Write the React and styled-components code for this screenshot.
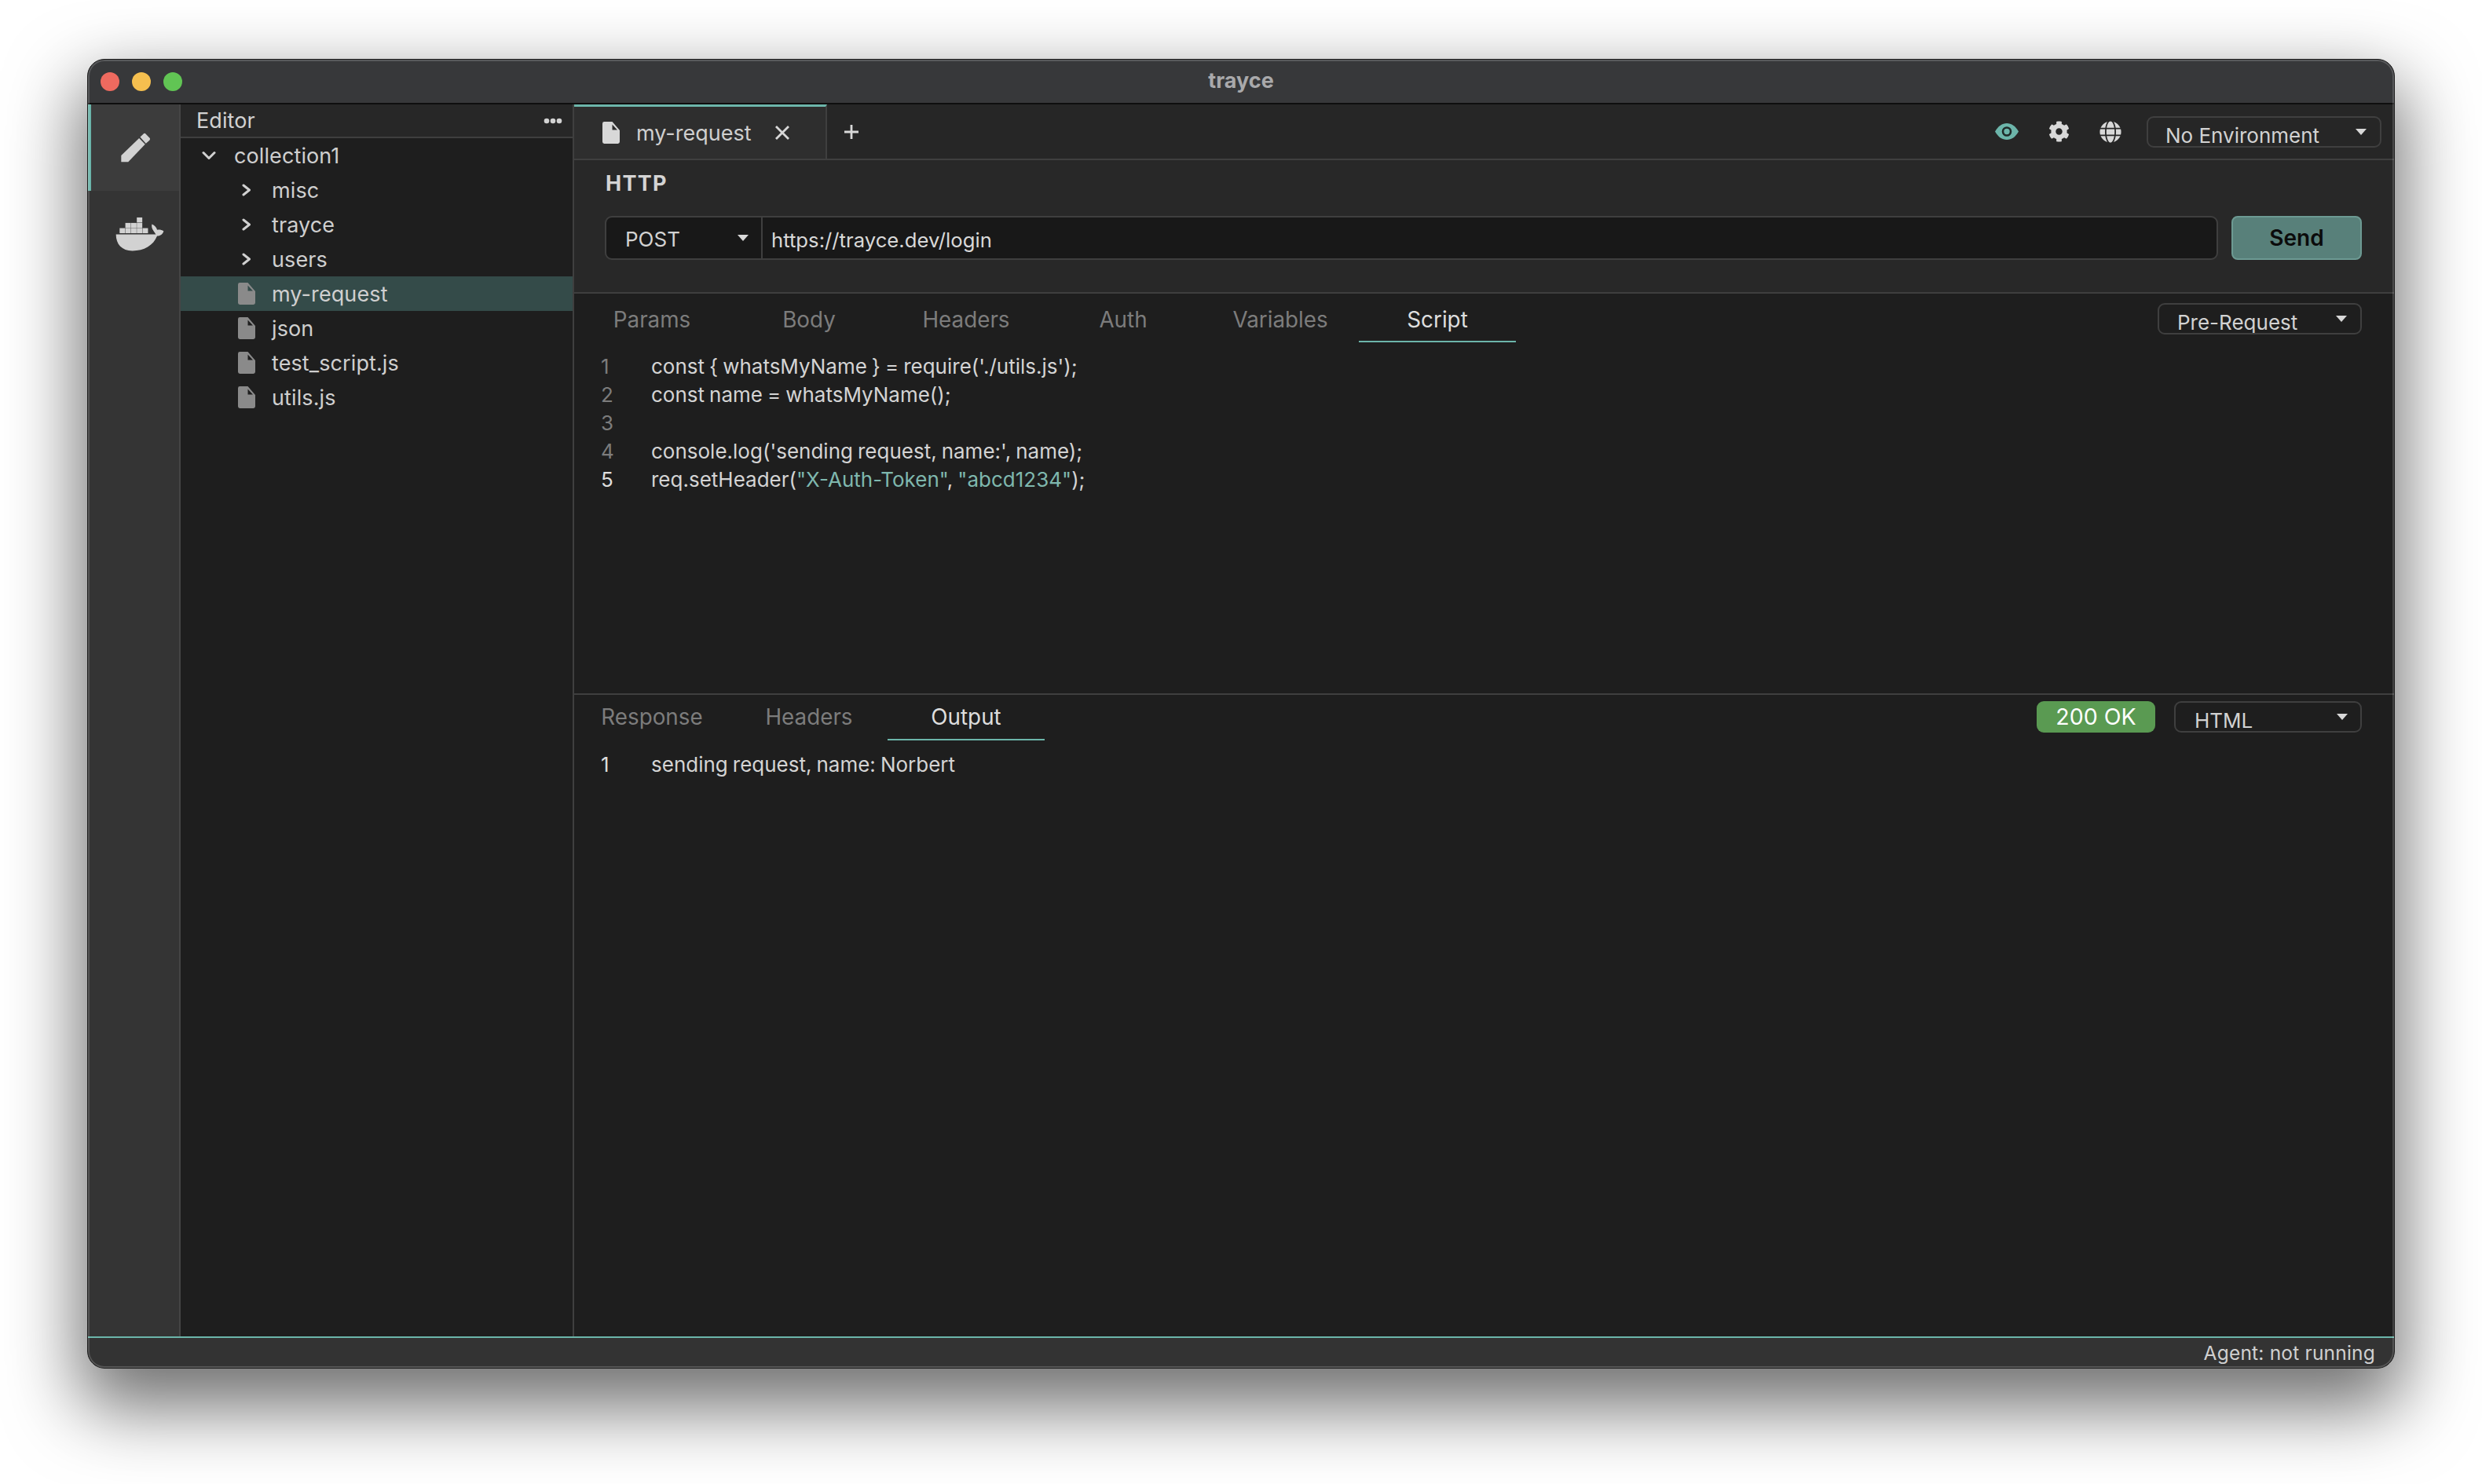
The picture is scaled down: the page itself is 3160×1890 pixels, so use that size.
import React from "react";
import styled, { createGlobalStyle } from "styled-components";
import { FaCog, FaGlobe } from "react-icons/fa";

const Global = createGlobalStyle`
  html, body { margin: 0; padding: 0; background: #fff; }
  * { box-sizing: border-box; }
  body { font-family: Inter, "Noto Sans", sans-serif; font-size: 28px; color: #d4d4d4; }
`;

const TEAL = "#6cb5aa";

const Page = styled.div`
  width: 3160px; height: 1890px; padding: 75px 111px 147px 111px; background: #fff; overflow: hidden;
`;
const Win = styled.div`
  position: relative; height: 100%; display: flex; flex-direction: column; overflow: hidden;
  border-radius: 22px; border: 1px solid #1c1c1c; background: #1e1e1e;
`;
const Shadow = styled.div`
  height: 100%; border-radius: 22px;
  box-shadow: 0 40px 92px 10px rgba(0,0,0,.56);
`;
const Rim = styled.div`
  position: absolute; inset: 0; border-radius: 21px; pointer-events: none;
  box-shadow: inset 0 0 0 2px rgba(255,255,255,.17);
`;
const TitleBar = styled.header`
  height: 57px; flex: none; display: flex; align-items: center; position: relative;
  background: #37383a; border-bottom: 2px solid #0e0e0e; padding-left: 16px; gap: 16px;
`;
const Light = styled.span`
  width: 24px; height: 24px; border-radius: 50%; background: ${p => p.$c};
`;
const Title = styled.div`
  position: absolute; left: 0; right: 0; text-align: center; top: 11px;
  font-size: 27px; line-height: 32px; font-weight: 700; color: #a9a9ab;
`;
const Body = styled.div`flex: 1; min-height: 0; display: flex;`;
const Activity = styled.nav`
  width: 118px; flex: none; background: #343434; border-right: 2px solid #454545;
`;
const ActItem = styled.div`
  height: ${p => p.$h}px; display: flex; align-items: center; justify-content: center;
  padding-left: ${p => p.$pl || 0}px;
  background: ${p => p.$active ? "#3c3c3c" : "transparent"};
  border-left: 4px solid ${p => p.$active ? TEAL : "transparent"};
`;
const Explorer = styled.aside`
  width: 501px; flex: none; background: #1e1e1e; border-right: 2px solid #3f3f3f;
  display: flex; flex-direction: column;
`;
const ExHead = styled.div`
  height: 43px; flex: none; background: #272727; border-bottom: 2px solid #3f3f3f;
  display: flex; align-items: center; justify-content: space-between; padding: 0 13px 0 20px;
  font-size: 27px; letter-spacing: .1px; color: #d2d2d2;
`;
const Row = styled.div`
  height: 44px; display: flex; align-items: center; gap: 16px; padding-left: ${p => 20 + p.$depth * 48}px;
  background: ${p => p.$sel ? "#344b49" : "transparent"}; color: #cfcfcf; font-size: 27px; letter-spacing: .1px;
`;
const IconBox = styled.span`
  width: 32px; height: 44px; flex: none; display: flex; align-items: center; justify-content: center;
`;
const Main = styled.main`flex: 1; min-width: 0; display: flex; flex-direction: column; background: #1e1e1e;`;
const Toolbar = styled.div`
  height: 71px; flex: none; background: #262626; border-bottom: 2px solid #3f3f3f;
  display: flex; align-items: stretch; padding-right: 16px;
`;
const OpenTab = styled.div`
  width: 322px; flex: none; display: flex; align-items: center; position: relative;
  background: #2e2e2e; border-top: 3px solid ${TEAL}; border-right: 2px solid #3f3f3f;
  padding-left: 36px; color: #cfcfcf; font-size: 27px;
`;
const TabLabel = styled.span`margin-left: 21px;`;
const CloseBtn = styled.span`margin-left: 29px; display: flex;`;
const PlusBtn = styled.span`margin-left: 21px; display: flex; align-items: center;`;
const ToolIcons = styled.div`margin-left: auto; display: flex; align-items: center; gap: 36px; margin-right: 31px;`;
const ToolIcon = styled.span`display: flex; width: 30px; justify-content: center;`;
const Select = styled.div`
  position: relative; display: flex; height: ${p => p.$h || 40}px; width: ${p => p.$w}px; flex: none;
  align-self: ${p => p.$center ? "center" : "flex-start"};
  margin-top: ${p => p.$mt || 0}px;
  padding: ${p => p.$pt}px 0 0 ${p => p.$pl}px;
  border: 2px solid #3f3f3f; border-radius: 9px; color: #d2d2d2; font-size: 26px; line-height: 34px;
  overflow: hidden; white-space: nowrap;
`;
const Caret = styled.span`
  position: absolute; top: 14px; right: ${p => p.$r}px; width: 0; height: 0;
  border-left: 7px solid transparent; border-right: 7px solid transparent; border-top: 8px solid #d8d8d8;
`;
const HttpSection = styled.section`
  height: 170px; flex: none; background: #282828; border-bottom: 2px solid #3f3f3f; padding: 14px 41px 0 39px;
`;
const HttpTitle = styled.div`
  margin-left: 1px; font-size: 27px; line-height: 32px; font-weight: 700; color: #d4d4d4; letter-spacing: 1.3px;
`;
const UrlRow = styled.div`display: flex; margin-top: 25px; gap: 17px;`;
const UrlGroup = styled.div`
  flex: 1; height: 56px; display: flex; border: 2px solid #3f3f3f; border-radius: 9px; background: #181818;
`;
const Method = styled.div`
  width: 199px; flex: none; position: relative; display: flex; align-items: center; padding: 3px 0 0 24px;
  border-right: 2px solid #3f3f3f; color: #d2d2d2; font-size: 26px;
`;
const MethodCaret = styled(Caret)`top: 22px; right: 16px;`;
const UrlText = styled.div`padding: 4px 0 0 11px; display: flex; align-items: center; color: #d8d8d8; font-size: 25.7px;`;
const SendBtn = styled.button`
  width: 166px; height: 56px; flex: none; border: 2px solid #6d9a93; border-radius: 8px; background: #58807a;
  color: #0b0b0b; font: 600 28px Inter, sans-serif; padding: 0;
`;
const RequestPanel = styled.section`height: 509px; flex: none; display: flex; flex-direction: column;`;
const ResponsePanel = styled.section`flex: 1; min-height: 0; border-top: 2px solid #3f3f3f; display: flex; flex-direction: column;`;
const TabsRow = styled.div`
  height: ${p => p.$h}px; flex: none; display: flex; padding-right: 41px; margin-left: -1px;
`;
const Tab = styled.div`
  width: 200px; flex: none; text-align: center; padding-top: ${p => p.$pt}px; line-height: 34px; font-size: 27.8px;
  color: ${p => p.$on ? "#dedede" : "#7c7c7c"};
  border-bottom: 2px solid ${p => p.$on ? TEAL : "transparent"};
`;
const Spacer = styled.div`flex: 1;`;
const Badge = styled.div`
  width: 151px; height: 40px; margin-top: 8px; margin-right: 24px; border-radius: 9px; background: #5a9a52;
  color: #fff; font-size: 28.5px; line-height: 39px; text-align: center; flex: none;
`;
const Code = styled.div`padding: ${p => p.$pt}px 0 0 34px;`;
const CodeLine = styled.div`
  display: flex; height: 36px; line-height: 36px; font-size: 26px; word-spacing: -1.3px; color: #d4d4d4;
`;
const LineNo = styled.span`width: 64px; flex: none; color: ${p => p.$on ? "#dedede" : "#7c7c7c"};`;
const Str = styled.span`color: #7fb8ae;`;
const StatusBar = styled.footer`
  height: 40px; flex: none; background: #333; border-top: 2px solid ${TEAL};
  display: flex; align-items: center; justify-content: flex-end; padding: 0 24px 1px 0;
  font-size: 24.5px; color: #d0d0d0; letter-spacing: .2px;
`;

const FileIcon = ({ color, w = 22, h = 28 }) => (
  <svg width={w} height={h} viewBox="0 0 65 82">
    <path fillRule="evenodd" fill={color} d="M7 0H37L65 32V75Q65 82 58 82H7Q0 82 0 75V7Q0 0 7 0ZM37 10V31H56Z" />
  </svg>
);
const ChevronRight = () => (
  <svg width="12" height="16" viewBox="0 0 12 16"><path d="M2 2L9.5 8L2 14" fill="none" stroke="#d0d0d0" strokeWidth="3" strokeLinecap="round" strokeLinejoin="round" /></svg>
);
const ChevronDown = () => (
  <svg width="18" height="12" viewBox="0 0 18 12"><path d="M2 2.5L9 9.5L16 2.5" fill="none" stroke="#d0d0d0" strokeWidth="3" strokeLinecap="round" strokeLinejoin="round" /></svg>
);
const Pencil = () => (
  <svg width="43" height="42" viewBox="60 50 130 125" fill="#d2d2d2">
    <path d="M70 168V143L139 76L162 100L97 168Z" />
    <path d="M143 72L155 60Q160 55 165 60L178 74Q184 79 178 85L165 97Z" />
  </svg>
);
const Docker = () => (
  <svg width="62" height="45" viewBox="50 380 187 134" fill="#d2d2d2">
    {[[66,423],[88,423],[110,423],[132,423],[154,423],[88,403],[110,403],[132,403],[132,382]].map(([x,y]) => (
      <rect key={x + "-" + y} x={x} y={y} width="21" height="19.5" />
    ))}
    <path d="M52 447H205C198 435 186 425 190 408C200 412 208 420 210 430C218 428 228 430 235 434C232 446 222 453 210 453C195 490 160 510 115 510C75 510 52 485 52 447Z" />
  </svg>
);
const Eye = () => (
  <svg width="30" height="21" viewBox="0 0 30 21">
    <path d="M0 10.5C4 3.5 9 0 15 0C21 0 26 3.5 30 10.5C26 17.5 21 21 15 21C9 21 4 17.5 0 10.5Z" fill={TEAL} />
    <circle cx="15" cy="10.5" r="5" fill="none" stroke="#1f2a29" strokeWidth="2.6" />
  </svg>
);
const Dots = () => (
  <svg width="24" height="8" viewBox="0 0 24 8" fill="#d2d2d2"><circle cx="4" cy="4" r="3.3" /><circle cx="12" cy="4" r="3.3" /><circle cx="20" cy="4" r="3.3" /></svg>
);
const Close = () => (
  <svg width="20" height="20" viewBox="0 0 20 20"><path d="M2 2L18 18M18 2L2 18" stroke="#d8d8d8" strokeWidth="2.8" /></svg>
);
const Plus = () => (
  <svg width="20" height="20" viewBox="0 0 20 20"><path d="M10 1V19M1 10H19" stroke="#d8d8d8" strokeWidth="2.8" /></svg>
);

const tree = [
  { label: "misc" }, { label: "trayce" }, { label: "users" },
  { label: "my-request", file: true, sel: true },
  { label: "json", file: true }, { label: "test_script.js", file: true }, { label: "utils.js", file: true },
];
const reqTabs = ["Params", "Body", "Headers", "Auth", "Variables", "Script"];
const resTabs = ["Response", "Headers", "Output"];

export default function App() {
  return (
    <Page>
      <Global />
      <Shadow>
        <Win>
          <TitleBar>
            <Light $c="#ee6a5f" /><Light $c="#f5bf4f" /><Light $c="#61c554" />
            <Title>trayce</Title>
          </TitleBar>
          <Body>
            <Activity>
              <ActItem $h={110} $active><Pencil /></ActItem>
              <ActItem $h={110} $pl={12}><Docker /></ActItem>
            </Activity>
            <Explorer>
              <ExHead>Editor<Dots /></ExHead>
              <Row $depth={0}><IconBox><ChevronDown /></IconBox>collection1</Row>
              {tree.map(t => (
                <Row key={t.label} $depth={1} $sel={t.sel}>
                  <IconBox>{t.file ? <FileIcon color="#8a8a8a" /> : <ChevronRight />}</IconBox>{t.label}
                </Row>
              ))}
            </Explorer>
            <Main>
              <Toolbar>
                <OpenTab>
                  <FileIcon color="#d8d8d8" />
                  <TabLabel>my-request</TabLabel>
                  <CloseBtn><Close /></CloseBtn>
                </OpenTab>
                <PlusBtn><Plus /></PlusBtn>
                <ToolIcons>
                  <ToolIcon><Eye /></ToolIcon>
                  <ToolIcon><FaCog size={27} color="#d8d8d8" /></ToolIcon>
                  <ToolIcon><FaGlobe size={28} color="#d8d8d8" /></ToolIcon>
                </ToolIcons>
                <Select $w={299} $h={40} $center $pt={6} $pl={22}>No Environment<Caret $r={17} /></Select>
              </Toolbar>
              <HttpSection>
                <HttpTitle>HTTP</HttpTitle>
                <UrlRow>
                  <UrlGroup>
                    <Method>POST<MethodCaret /></Method>
                    <UrlText>https://trayce.dev/login</UrlText>
                  </UrlGroup>
                  <SendBtn>Send</SendBtn>
                </UrlRow>
              </HttpSection>
              <RequestPanel>
                <TabsRow $h={62}>
                  {reqTabs.map(t => <Tab key={t} $pt={16} $on={t === "Script"}>{t}</Tab>)}
                  <Spacer />
                  <Select $w={260} $mt={12} $pt={6} $pl={23}>Pre-Request<Caret $r={17} /></Select>
                </TabsRow>
                <Code $pt={13}>
                  <CodeLine><LineNo>1</LineNo>{"const { whatsMyName } = require('./utils.js');"}</CodeLine>
                  <CodeLine><LineNo>2</LineNo>{"const name = whatsMyName();"}</CodeLine>
                  <CodeLine><LineNo>3</LineNo></CodeLine>
                  <CodeLine><LineNo>4</LineNo>{"console.log('sending request, name:', name);"}</CodeLine>
                  <CodeLine><LineNo $on>5</LineNo><span>req.setHeader(<Str>"X-Auth-Token"</Str>, <Str>"abcd1234"</Str>);</span></CodeLine>
                </Code>
              </RequestPanel>
              <ResponsePanel>
                <TabsRow $h={58}>
                  {resTabs.map(t => <Tab key={t} $pt={11} $on={t === "Output"}>{t}</Tab>)}
                  <Spacer />
                  <Badge>200 OK</Badge>
                  <Select $w={239} $mt={8} $pt={6} $pl={24}>HTML<Caret $r={16} /></Select>
                </TabsRow>
                <Code $pt={13}>
                  <CodeLine><LineNo $on>1</LineNo>sending request, name: Norbert</CodeLine>
                </Code>
              </ResponsePanel>
            </Main>
          </Body>
          <StatusBar>Agent: not running</StatusBar>
          <Rim />
        </Win>
      </Shadow>
    </Page>
  );
}
